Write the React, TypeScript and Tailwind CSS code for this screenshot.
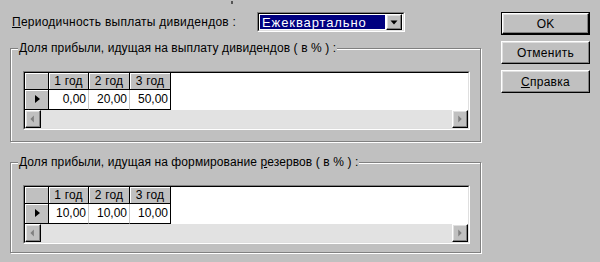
import React from "react";

const raised =
  "border border-t-white border-l-white border-r-black border-b-black shadow-[inset_-1px_-1px_0_#808080,inset_1px_1px_0_#dfdfdf]";

function LeftArrow() {
  return (
    <svg width="16" height="16" viewBox="0 0 16 16">
      <path d="M9 4 L5 8 L9 12 Z" fill="#808080" />
    </svg>
  );
}
function RightArrow() {
  return (
    <svg width="16" height="16" viewBox="0 0 16 16">
      <path d="M6 4 L10 8 L6 12 Z" fill="#808080" />
    </svg>
  );
}

function Grid({ values }: { values: string[] }) {
  return (
    <div className="w-[447px] h-[59px] border border-t-[#808080] border-l-[#808080] border-r-white border-b-white">
      <div className="w-full h-full flex flex-col border border-t-black border-l-black border-r-[#dfdfdf] border-b-[#dfdfdf] bg-white">
        <div className="flex h-[17px]">
          <div className="w-[24px] bg-[#c0c0c0] border-r border-b border-black shadow-[inset_1px_1px_0_#fff]" />
          {["1 год", "2 год", "3 год"].map((h, i) => (
            <div
              key={h}
              className={`${i === 0 ? "w-[40px]" : "w-[41px]"} bg-[#c0c0c0] border-r border-b border-black shadow-[inset_1px_1px_0_#fff] flex items-center justify-center leading-none tracking-[0.2px]`}
            >
              {h}
            </div>
          ))}
          <div className="flex-1 bg-white" />
        </div>
        <div className="flex h-[21px]">
          <div className="w-[24px] bg-[#c0c0c0] border-r border-b border-black shadow-[inset_1px_1px_0_#fff] flex items-center justify-center">
            <svg width="8" height="10" viewBox="0 0 8 10">
              <path d="M2 1 L7 5 L2 9 Z" fill="#000" />
            </svg>
          </div>
          {values.map((v, i) => (
            <div
              key={i}
              className={`${i === 0 ? "w-[40px]" : "w-[41px]"} bg-white border-b border-black ${i === 2 ? "border-r border-r-black" : "border-r border-r-[#c8c8c8]"} flex items-center justify-end pr-[2px] leading-none`}
            >
              {v}
            </div>
          ))}
          <div className="flex-1 bg-white" />
        </div>
        <div className="flex flex-1 bg-[#e2e2e2]">
          <div className={`w-[16px] h-full bg-[#c0c0c0] ${raised} flex items-center justify-center`}>
            <LeftArrow />
          </div>
          <div className="flex-1" />
          <div className={`w-[16px] h-full bg-[#c0c0c0] ${raised} flex items-center justify-center`}>
            <RightArrow />
          </div>
        </div>
      </div>
    </div>
  );
}

function Group({ label, children, h }: { label: React.ReactNode; children: React.ReactNode; h: string }) {
  return (
    <div className={`relative w-[471px] ${h} border border-[#808080] shadow-[inset_1px_1px_0_#fff,1px_1px_0_#fff] pl-[12px] pt-[22px]`}>
      <span className="absolute left-[7px] top-[-8px] bg-[#c0c0c0] px-[1px] leading-[14px] tracking-[0.1px]">{label}</span>
      {children}
    </div>
  );
}

export default function App() {
  return (
    <div
      className="relative w-[600px] h-[262px] bg-[#c0c0c0] text-black text-[12px] flex overflow-hidden"
      style={{ fontFamily: '"Liberation Sans", Arial, sans-serif' }}
    >
      <span className="absolute left-[231px] top-[1px] w-[2px] h-[3px] bg-[#555]" />
      <div className="ml-[10px] w-[472px] flex flex-col">
        <div className="h-[48px] flex items-start pt-[12px]">
          <div className="ml-[2px] w-[245px] h-[20px] flex items-center leading-none tracking-[0.25px]">
            <span>
              <span className="underline">П</span>ериодичность выплаты дивидендов :
            </span>
          </div>
          <div className="w-[148px] h-[20px] border border-t-[#808080] border-l-[#808080] border-r-white border-b-white">
            <div className="w-full h-full flex items-center border border-t-black border-l-black border-r-[#dfdfdf] border-b-[#dfdfdf] bg-white p-[1px]">
              <div className="flex-1 h-full bg-[#000080] text-white flex items-center pl-[2px] leading-none text-[13px] tracking-[0.9px]">
                Ежеквартально
              </div>
              <div className={`w-[16px] h-[16px] ml-[1px] bg-[#c0c0c0] ${raised} flex items-center justify-center`}>
                <svg width="8" height="5" viewBox="0 0 8 5">
                  <path d="M0.5 0.5 L7.5 0.5 L4 4.5 Z" fill="#000" />
                </svg>
              </div>
            </div>
          </div>
        </div>
        <Group h="h-[94px]" label="Доля прибыли, идущая на выплату дивидендов ( в % ) :">
          <Grid values={["0,00", "20,00", "50,00"]} />
        </Group>
        <div className="h-[20px]" />
        <Group
          h="h-[91px]"
          label={
            <>
              Доля прибыли, идущая на формирование <span className="underline">р</span>езервов ( в % ) :
            </>
          }
        >
          <Grid values={["10,00", "10,00", "10,00"]} />
        </Group>
      </div>
      <div className="ml-[19px] pt-[12px] w-[89px] flex flex-col gap-[6px]">
        <div className="h-[23px] border border-black">
          <div className={`w-full h-full ${raised} flex items-center justify-center`}>OK</div>
        </div>
        <div className={`h-[23px] ${raised} flex items-center justify-center tracking-[0.3px]`}>Отменить</div>
        <div className={`h-[23px] ${raised} flex items-center justify-center tracking-[0.3px]`}>
          <span>
            <span className="underline">С</span>правка
          </span>
        </div>
      </div>
    </div>
  );
}
